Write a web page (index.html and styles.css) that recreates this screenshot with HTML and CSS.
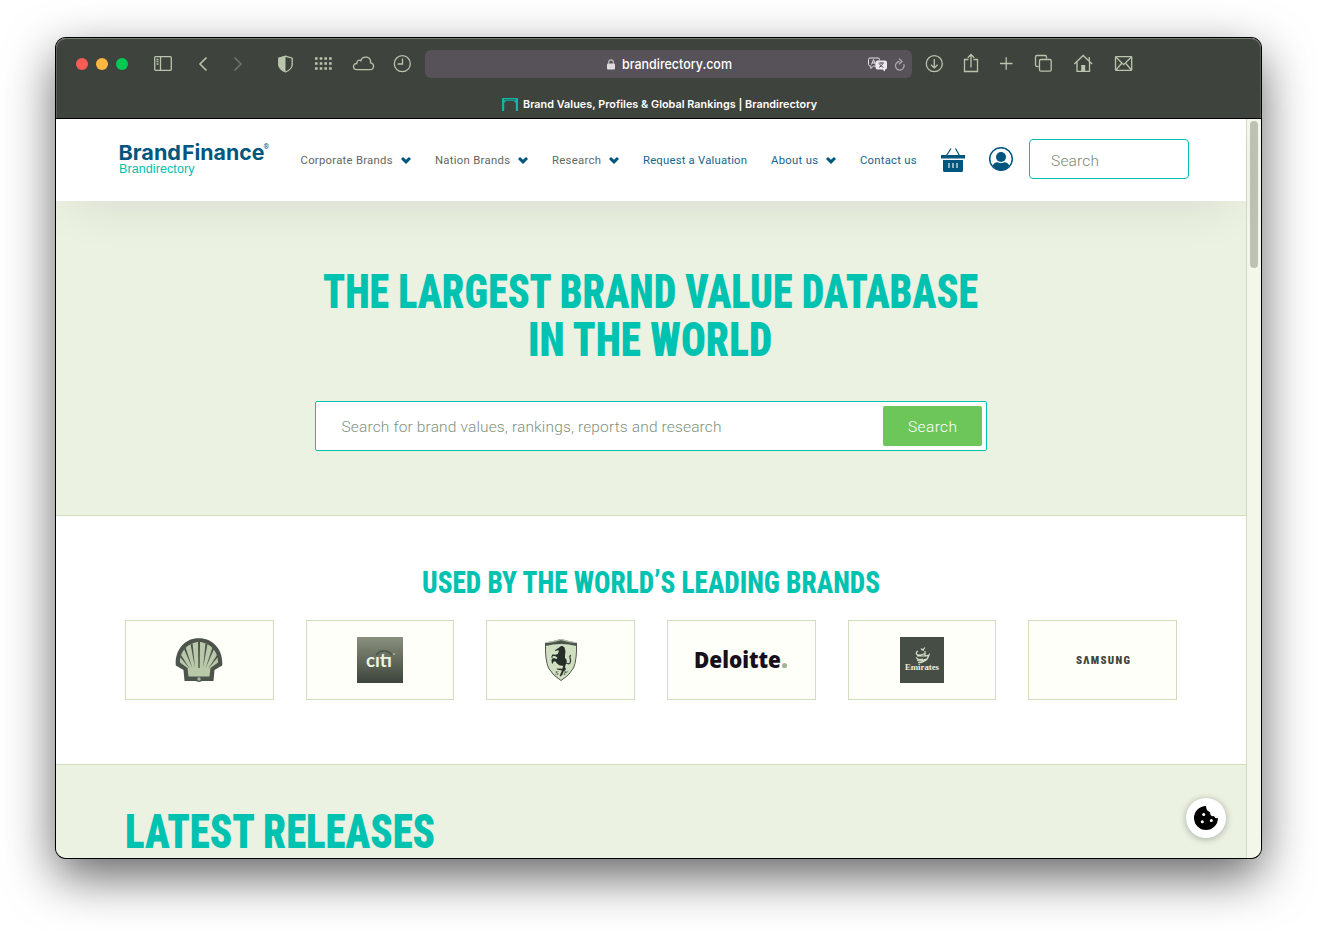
FILE: index.html
```html
<!DOCTYPE html>
<html lang="en">
<head>
<meta charset="utf-8">
<title>Brand Values, Profiles &amp; Global Rankings | Brandirectory</title>
<link rel="stylesheet" href="styles.css">
</head>
<body>
<div class="window">
  <div class="chrome">
    <div class="toolbar">
      <svg class="tool" width="76" viewBox="70 50 76 28"><circle cx="82" cy="64" r="6" fill="#ff5b55"/><circle cx="102" cy="64" r="6" fill="#ffb742"/><circle cx="122" cy="64" r="6" fill="#00ca55"/></svg>
      <svg class="tool" width="40" viewBox="146 50 40 28"><rect x="154.700" y="56.700" width="16.600" height="13.600" rx="1"/><path d="M160.500 57v13M156.500 59.500h2M156.500 61.700h2M156.500 64h2"/></svg>
      <svg class="tool" width="34" viewBox="186 50 34 28"><path d="M206.500 57.500l-6.500 6.500 6.500 6.500" stroke-width="1.600"/></svg>
      <svg class="tool dim" width="40" viewBox="220 50 40 28"><path d="M234.500 57.500l6.500 6.500-6.500 6.500" stroke-width="1.500"/></svg>
      <svg class="tool" width="42" viewBox="260 50 42 28"><path d="M285.500 56.200l6.700 2v6.800q-.5 4.500-6.700 7-6.200-2.500-6.700-7v-6.800z"/><path class="solid" d="M285.500 56l-7 2v7q.5 4.500 7 7z"/></svg>
      <svg class="tool" width="40" viewBox="302 50 40 28"><path d="M315 58.500h17M315 63.500h17M315 68.500h17" stroke-width="2.600" stroke-dasharray="2.600 2.100"/></svg>
      <svg class="tool" width="42" viewBox="342 50 42 28"><path d="M357.500 69.700c-5.500 0-5-6.500-.7-6.200-.3-3 2.500-4 4-2.700 2-6 10.500-4.300 9.700 2 4.500.8 3.800 6.900-.5 6.900z"/></svg>
      <svg class="tool" width="41" viewBox="384 50 41 28"><circle cx="402.300" cy="63.700" r="8"/><path d="M402.500 58.500v5.500h-4.800"/></svg>
      <div class="address">
        <svg class="lock" viewBox="0 0 8 11"><rect x="0" y="4.500" width="8" height="6" rx="1" fill="#dedcdf"/><path d="M1.700 5V3.200a2.300 2.300 0 014.600 0V5" fill="none" stroke="#bdbabe" stroke-width="1.200"/></svg>
        <svg class="domain" width="112" height="20"><text x="0" y="15" textLength="110" lengthAdjust="spacingAndGlyphs">brandirectory.com</text></svg>
        <svg class="address-icons" viewBox="866 50 40 28"><path d="M877 66h-3.500l-2.700 2.500V66q-2.300 0-2.300-1.500v-5q0-1.500 1.500-1.500h8q1.500 0 1.500 1.500v1" fill="none" stroke="#e5e2e6"/><path d="M871.500 64.500l2-5 2 5M872.200 63h2.700" fill="none" stroke="#e5e2e6"/><path d="M877.500 60.500h7.500q2 0 2 2v5q0 2-2 2v2l-2.500-2h-5q-2 0-2-2v-5q0-2 2-2z" fill="#eceaed"/><path d="M878.500 63h5.500M881.200 62v1.500M883 63.500q-1.500 3-4 4M879.500 64q1.500 2.500 4 3.500" fill="none" stroke="#5a535b"/><path d="M899.500 61.500a4.300 4.300 0 104.300 2.800M899 58.800l3 2.700-3 2.800" fill="none" stroke="#aaa6ac" stroke-width="1.300"/></svg>
      </div>
      <svg class="tool" width="42" viewBox="912 50 42 28"><circle cx="934.300" cy="63.700" r="8"/><path d="M934.300 59v8.500M931 64.700l3.300 3.200 3.300-3.200"/></svg>
      <svg class="tool" width="36" viewBox="954 50 36 28"><path d="M968.500 59.500h-4v12h13v-12H973.500M971 67.500V55M967.800 57.800L971 54.500l3.200 3.300"/></svg>
      <svg class="tool" width="32" viewBox="990 50 32 28"><path d="M1006.200 57.200v12.500M1000 63.500h12.500"/></svg>
      <svg class="tool" width="40" viewBox="1022 50 40 28"><path d="M1038.500 66.500h-1.500q-1.500 0-1.500-1.500v-8q0-1.500 1.500-1.500h8q1.500 0 1.500 1.500v1.500"/><rect x="1039.500" y="59.500" width="11.700" height="11.700" rx="1.500"/></svg>
      <svg class="tool" width="42" viewBox="1062 50 42 28"><path d="M1074.300 64l8.900-8.500 8.900 8.500M1077 62v9.300h12.500V62M1089.300 60.800V57"/><path class="solid" d="M1081.200 65h4v6.500h-4z"/></svg>
      <svg class="tool" width="40" viewBox="1104 50 40 28"><rect x="1115.500" y="56.700" width="16.200" height="13.600" rx=".5"/><path d="M1116 57.200l7.600 7.500 7.600-7.500M1116 70l5.500-6.500M1131.500 70l-5.700-6.500"/></svg>
    </div>
    <div class="tab">
      <svg width="16" height="13" viewBox="0 0 16 13"><path d="M0 0h16v13h-2.200V5l-2-2H4L2.200 5v8H0z" fill="#0fb5a8"/><path d="M2 1h12v1.500H2z" fill="#25796f"/></svg>
      <svg class="tab-title" width="296" height="16"><text x="0" y="12" textLength="294">Brand Values, Profiles &amp; Global Rankings | Brandirectory</text></svg>
    </div>
  </div>
  <div class="viewport">
    <div class="page">
      <header class="header">
        <svg class="logo" width="152" height="38" viewBox="119 141 152 38"><text class="logo-main" x="118.500" y="159.500" textLength="62.500" lengthAdjust="spacingAndGlyphs">Brand</text><text class="logo-main" x="182" y="159.500" textLength="82.500" lengthAdjust="spacingAndGlyphs">Finance</text><text class="logo-reg" x="263.500" y="149">®</text><text class="logo-sub" x="119" y="173" textLength="75.500">Brandirectory</text></svg>
        <nav class="nav">
          <a class="grey"><svg width="92" height="16"><text x="-.5" y="12" textLength="92">Corporate Brands</text></svg><svg class="caret" viewBox="0 0 10 7"><path d="M0 2l2-2 3 2.700L8 0l2 2-5 5z"/></svg></a>
          <a class="grey"><svg width="75" height="16"><text y="12" textLength="75">Nation Brands</text></svg><svg class="caret" viewBox="0 0 10 7"><path d="M0 2l2-2 3 2.700L8 0l2 2-5 5z"/></svg></a>
          <a class="grey"><svg width="49" height="16"><text y="12" textLength="49">Research</text></svg><svg class="caret" viewBox="0 0 10 7"><path d="M0 2l2-2 3 2.700L8 0l2 2-5 5z"/></svg></a>
          <a><svg width="104" height="16"><text y="12" textLength="104">Request a Valuation</text></svg></a>
          <a><svg width="47" height="16"><text y="12" textLength="47">About us</text></svg><svg class="caret" viewBox="0 0 10 7"><path d="M0 2l2-2 3 2.700L8 0l2 2-5 5z"/></svg></a>
          <a><svg width="57" height="16"><text y="12" textLength="56.500">Contact us</text></svg></a>
        </nav>
        <svg class="basket" width="24" height="24" viewBox="0 0 24 24"><path d="M0 7h24v3.500H0zM2 12h20v10.500q0 1.500-1.500 1.500h-17Q2 24 2 22.500z" fill="#00567d"/><path d="M5.500 7.500L10 .5M18.500 7.500L14.500.5" stroke="#00567d" stroke-width="1.200"/><path d="M8 15v5M12 15v5M16 15v5" stroke="#a5c5d2" stroke-width="1.700"/></svg>
        <svg class="account" width="24" height="24" viewBox="0 0 24 24"><circle cx="12" cy="12" r="11.300" fill="#fff" stroke="#00567d" stroke-width="1.500"/><circle cx="12" cy="10" r="5" fill="#00567d"/><path d="M3.700 18.500q2-3.500 5-3.300 3.300 1.700 6.600 0 3-.2 5 3.300Q17 23.300 12 23.300t-8.300-4.800z" fill="#00567d"/></svg>
        <div class="top-search"><svg width="50" height="22"><text y="17" textLength="48">Search</text></svg></div>
      </header>
      <section class="hero">
        <h1><svg width="670" height="48"><text x="334.500" y="45.500" text-anchor="middle" textLength="655" lengthAdjust="spacingAndGlyphs">THE LARGEST BRAND VALUE DATABASE</text></svg><svg width="670" height="48"><text x="334" y="45.500" text-anchor="middle" textLength="244" lengthAdjust="spacingAndGlyphs">IN THE WORLD</text></svg></h1>
        <div class="search">
          <svg width="390" height="24"><text x="-.5" y="18" textLength="380">Search for brand values, rankings, reports and research</text></svg>
          <div class="button"><svg width="50" height="24"><text y="18" textLength="49">Search</text></svg></div>
        </div>
      </section>
      <section class="brands">
        <h2><svg width="470" height="40"><text x="235" y="31" text-anchor="middle" textLength="458" lengthAdjust="spacingAndGlyphs">USED BY THE WORLD’S LEADING BRANDS</text></svg></h2>
        <div class="cards">
          <div class="card"><svg width="48" height="46" viewBox="0 0 48 46"><path d="M24 1.300C10 1 -.5 13 .8 28.500l7.700 4.500 1 11h11l3.500 1 3.500-1h11l1-11 7.700-4.500C48.500 13 38 1.300 24 1.300z" fill="#4c544c"/><path d="M24 5C14 5 4.500 14 5 25.500L12.500 31l1 8.500h21l1-8.500 7.500-5.500C43.500 14 34 5 24 5z" fill="#b9c8a9"/><path d="M23.300 31L23 5h2l-.3 26zM20 31L15.500 7l2-1zM28 31L32.500 7l-2-1zM17.500 31.500L9 12l1.500-1.800zM30.500 31.500L39 12l-1.500-1.800zM15 32L5 20l.7-2.500zM33 32L43 20l-.7-2.500z" fill="#4c544c"/><circle cx="24" cy="42" r="1.700" fill="#a9b79c"/></svg></div>
          <div class="card"><svg width="46" height="46" viewBox="0 0 46 46"><defs><linearGradient id="cg" x2="0" y2="1"><stop stop-color="#89907d"/><stop offset="1" stop-color="#3c443c"/></linearGradient></defs><path d="M0 0h46v46H0z" fill="url(#cg)"/><path d="M19 18q8-8.500 16 0" fill="none" stroke="#4a534b" stroke-width="1.500"/><text class="citi" x="9" y="29.500" textLength="26" lengthAdjust="spacingAndGlyphs">cıtı</text><circle cx="37" cy="17" r=".9" fill="#b2bca5"/></svg></div>
          <div class="card"><svg width="34" height="44" viewBox="0 0 34 44"><path d="M1.500 5Q8 4 17 1.500q9 2.500 15.500 3.500 .5 17-3 25-4.500 8-12.500 12.500Q9 38 4.500 30 1 22 1.500 5z" fill="#d0dfc0" stroke="#4f574e"/><path d="M1.500 5q8 0 15.500-3 8 3 15.500 3v3Q25 6 17 6 9 6 1.500 8z" fill="#4b554b"/><path d="M2 4.700Q8 4 17 1.500q9 2.500 15 3.200" fill="none" stroke="#bfcdb0"/><path d="M14.500 10l2.500-2 1.500 0 2 1.500 1 4-.5 4 0 2.500q2.500 2 1.500 5l-1 2-.5 2 1 2.500-2.500 2-1 3-2 2-.8-.7 1.600-3.800.7-1.500-5-1-.2-1 5.500.3 1-2.800-4-.7-2.500-2-1.500-2-2 .5-.5 2-1-.5-.3-3.500 1.300-1.500 2 0 1.500 1 1.200-1.700-2.700-1.600-2 0-.7 2.500-.8-1.500 1-2.500 3.200.2 2.300-.6 1-2.500-.5-1.500-2.700 1-.8-.8z" fill="#272e2a"/><path d="M22 25q4 2 4.500-1.500.3-2-.5-3.500t.8-3" fill="none" stroke="#3a423c" stroke-width="1.300"/><text class="sf" x="11" y="37">S</text><text class="sf" x="19.500" y="37">F</text></svg></div>
          <div class="card"><svg width="94" height="24" viewBox="0 0 94 24"><text class="deloitte" x="0" y="19.500" textLength="87" lengthAdjust="spacingAndGlyphs">Deloitte</text><circle cx="90.500" cy="17.500" r="2.600" fill="#a5b597"/></svg></div>
          <div class="card"><svg width="44" height="46" viewBox="0 0 44 46"><path d="M0 0h44v46H0z" fill="#464d45"/><path d="M25 10.500q-2 3-3 1.500M21 11.500q1 2 3 1.500M18 14q-3 2-1 3.500t8-1M17 19h8M16 20.500q2 3 7 1.500M17 23q4 2 9-1M18 25.500q5 1 8-3M25 14v5q3 0 4-1-1 4-4 6" fill="none" stroke="#d6e1cb" stroke-width="1.200"/><text class="emirates" x="5" y="33" textLength="34" lengthAdjust="spacingAndGlyphs">Emirates</text></svg></div>
          <div class="card"><svg width="56" height="14" viewBox="0 0 56 14"><text class="samsung" x="1" y="11" textLength="54">SΛMSUNG</text></svg></div>
        </div>
      </section>
      <section class="latest">
        <h1><svg width="320" height="50"><text x="-1" y="45" textLength="310" lengthAdjust="spacingAndGlyphs">LATEST RELEASES</text></svg></h1>
      </section>
      <div class="cookie"><svg width="26" height="26" viewBox="0 0 26 26"><path d="M13 1a12 12 0 1012 12q-3 1-4-2-4 1-4-4-4-1-4-6z"/><g fill="#fff"><circle cx="10.700" cy="9.500" r="1.500"/><circle cx="9.300" cy="16.800" r="1.500"/><circle cx="18.300" cy="15.500" r="1.500"/></g></svg></div>
    </div>
    <div class="scrollbar"><div class="thumb"></div></div>
  </div>
</div>
</body>
</html>
```
FILE: styles.css
```css
* { box-sizing: border-box; }
body { margin: 0; padding: 38px 0 0 56px; height: 932px; overflow: hidden; background: #fff; font-family: Roboto, "Liberation Sans", sans-serif; }
svg { display: block; flex: none; }
h1, h2 { margin: 0; }

.window { width: 1205px; height: 820px; border-radius: 10px; box-shadow: 0 0 0 1px #000, 0 18px 50px rgba(0, 0, 0, .62); }
.chrome { height: 81px; background: #3f433d; border-bottom: 1px solid #000; border-radius: 10px 10px 0 0; box-shadow: inset 0 1px 0 #777c75, inset 1px 0 0 #5d625b, inset -1px 0 0 #5d625b; }
.toolbar { display: flex; align-items: center; padding: 12px 0 0 14px; }
.tool { height: 28px; fill: none; stroke: #b9c5ac; stroke-width: 1.3; }
.tool circle[fill] { stroke: none; }
.tool .solid { fill: #b9c5ac; stroke: none; }
.dim { stroke: #70776b; }
.address { display: flex; align-items: center; width: 487px; height: 28px; padding-left: 182px; border-radius: 6px; background: #575159; }
.lock { width: 8px; height: 11px; }
.domain { margin-left: 7px; font: 500 13.500px Inter, sans-serif; fill: #fff; }
.address-icons { width: 40px; height: 28px; margin-left: auto; margin-right: 6px; }
.tab { display: flex; align-items: center; height: 16px; margin-top: 18px; padding-left: 446px; }
.tab svg:first-child { margin-right: 5px; }
.tab-title { font: 600 10.800px Inter, sans-serif; fill: #fff; }

.viewport { display: flex; height: 739px; border-radius: 0 0 10px 10px; overflow: hidden; }
.page { position: relative; width: 1190px; }
.scrollbar { width: 15px; padding: 2px 3px; background: #f2f7e9; border-left: 1px solid #cfdfbe; }
.thumb { width: 8px; height: 147px; border-radius: 4px; background: #bdc2b6; }

.header { position: relative; z-index: 1; display: flex; height: 82px; padding-left: 63px; background: #fff; box-shadow: 0 20px 50px -15px rgba(0, 0, 0, .09); }
.logo { margin-top: 22px; overflow: visible; }
.logo-main { font: 700 20.500px Inter, sans-serif; fill: #00567d; }
.logo-reg { font-size: 7px; fill: #00567d; }
.logo-sub { font: 12.500px "Liberation Sans", sans-serif; fill: #00bfb0; }
.nav { display: flex; gap: 24px; height: 16px; margin: 33px 0 0 30px; font-size: 11.300px; fill: #17658a; }
.nav a { display: flex; align-items: center; }
.nav svg { overflow: visible; }
.nav .grey { fill: #62675f; }
.nav .caret { width: 10px; height: 7px; margin-left: 8px; fill: #00567d; }
.nav a:nth-child(2) .caret { margin-left: 7.500px; }
.nav a:nth-child(3) .caret { margin-left: 8.500px; }
.basket { margin: 29px 0 0 24px; }
.account { margin: 28px 0 0 24px; }
.top-search { width: 160px; height: 40px; margin: 20px 0 0 16px; padding: 9px 21px; border: 1px solid #00bfb0; border-radius: 4px; font-size: 15.500px; font-weight: 300; fill: #788a78; }

.hero { height: 315px; padding-top: 61px; background: #ebf2e2; border-bottom: 1px solid #cfdfbe; }
h1 svg, h2 svg { font-family: Roboto, sans-serif; font-stretch: 75%; font-weight: 900; fill: #00c2b0; overflow: visible; }
h1 svg { font-size: 48px; }
.hero h1 svg { margin-left: 260px; }
.search { display: flex; align-items: center; justify-content: space-between; width: 672px; height: 50px; margin: 43px 0 0 259px; padding: 0 4px 0 26px; border: 1px solid #00c2b0; border-radius: 2px; background: #fff; font-size: 15.500px; fill: #80927f; font-weight: 300; }
.button { display: flex; align-items: center; justify-content: center; width: 99px; height: 40px; border-radius: 2px; background: #6dc65a; fill: #fff; }

.brands { height: 249px; padding-top: 46px; background: #fff; border-bottom: 1px solid #cfdfbe; }
h2 svg { margin-left: 360px; font-size: 32px; font-weight: 800; }
.cards { display: grid; grid-template-columns: repeat(6, 1fr); gap: 32px; width: 1052px; margin: 18px 0 0 69px; }
.card { display: flex; align-items: center; justify-content: center; height: 80px; background: #fefff8; border: 1px solid #cfdfbe; }
.citi { font: 700 19px Lato, sans-serif; fill: #edf5e2; }
.sf { font: italic 7px "Liberation Serif", serif; fill: #303831; }
.deloitte { font: 800 22px "Open Sans", sans-serif; fill: #170f1c; }
.emirates { font: 700 9px "Liberation Serif", serif; fill: #e8f1dd; }
.samsung { font: 900 11px Roboto, sans-serif; font-stretch: 75%; fill: #3e463e; }

.latest { height: 93px; padding: 38px 0 0 70px; background: #ebf2e2; overflow: hidden; }
.cookie { position: absolute; right: 20px; bottom: 20px; display: flex; align-items: center; justify-content: center; width: 40px; height: 40px; border-radius: 50%; background: #fff; box-shadow: 0 1px 7px rgba(0, 0, 0, .3); }
```
